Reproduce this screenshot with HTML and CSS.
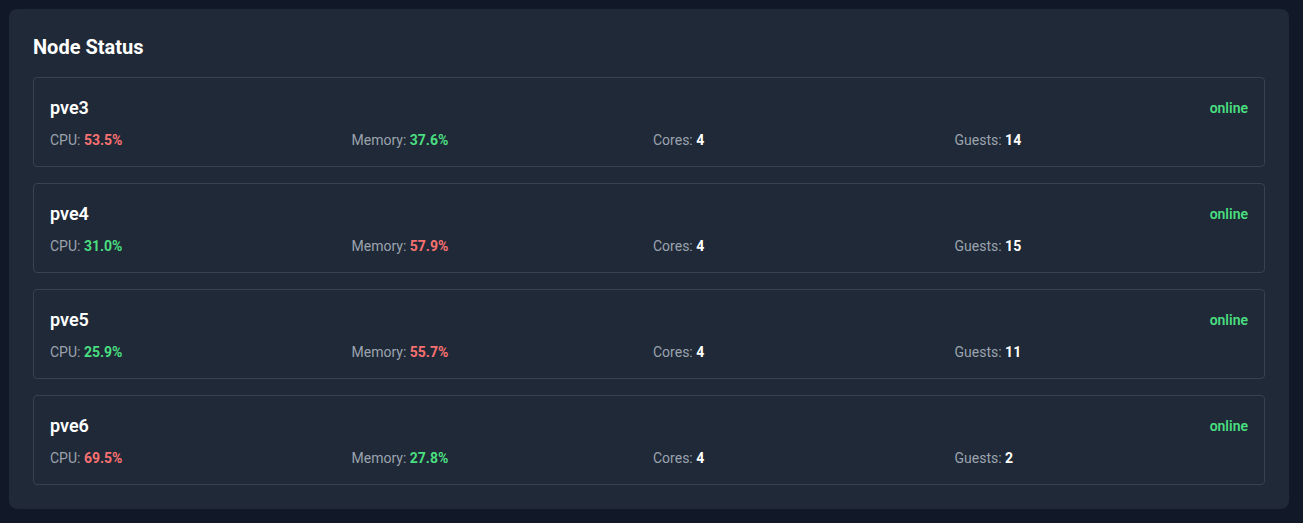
FILE: index.html
```html
<!DOCTYPE html>
<html>
<head>
<meta charset="utf-8">
<link rel="stylesheet" href="styles.css">
</head>
<body>
<div class="panel">
  <h2 class="title">Node Status</h2>
  <div class="list">
    <div class="node">
      <div class="head"><span class="name">pve3</span><span class="status">online</span></div>
      <div class="stats">
        <div><span class="lbl">CPU:</span> <span class="val red">53.5%</span></div>
        <div><span class="lbl">Memory:</span> <span class="val green">37.6%</span></div>
        <div><span class="lbl">Cores:</span> <span class="val">4</span></div>
        <div><span class="lbl">Guests:</span> <span class="val">14</span></div>
      </div>
    </div>
    <div class="node">
      <div class="head"><span class="name">pve4</span><span class="status">online</span></div>
      <div class="stats">
        <div><span class="lbl">CPU:</span> <span class="val green">31.0%</span></div>
        <div><span class="lbl">Memory:</span> <span class="val red">57.9%</span></div>
        <div><span class="lbl">Cores:</span> <span class="val">4</span></div>
        <div><span class="lbl">Guests:</span> <span class="val">15</span></div>
      </div>
    </div>
    <div class="node">
      <div class="head"><span class="name">pve5</span><span class="status">online</span></div>
      <div class="stats">
        <div><span class="lbl">CPU:</span> <span class="val green">25.9%</span></div>
        <div><span class="lbl">Memory:</span> <span class="val red">55.7%</span></div>
        <div><span class="lbl">Cores:</span> <span class="val">4</span></div>
        <div><span class="lbl">Guests:</span> <span class="val">11</span></div>
      </div>
    </div>
    <div class="node">
      <div class="head"><span class="name">pve6</span><span class="status">online</span></div>
      <div class="stats">
        <div><span class="lbl">CPU:</span> <span class="val red">69.5%</span></div>
        <div><span class="lbl">Memory:</span> <span class="val green">27.8%</span></div>
        <div><span class="lbl">Cores:</span> <span class="val">4</span></div>
        <div><span class="lbl">Guests:</span> <span class="val">2</span></div>
      </div>
    </div>
  </div>
</div>
</body>
</html>
```
FILE: styles.css
```css
html, body {
  margin: 0;
  background: #111827;
}
body {
  padding: 9px 14px 15px 9px;
  font-family: Roboto, "Noto Sans", sans-serif;
  color: #fff;
}
.panel {
  background: #1f2937;
  border-radius: 8px;
  padding: 24px;
  width: 1280px;
  box-sizing: border-box;
}
.title {
  margin: 0 0 16px;
  font-size: 20px;
  line-height: 28px;
  font-weight: 700;
}
.list {
  display: flex;
  flex-direction: column;
  gap: 16px;
}
.node {
  border: 1px solid #374151;
  border-radius: 4px;
  padding: 16px;
}
.head {
  display: flex;
  justify-content: space-between;
  align-items: center;
  height: 28px;
}
.name {
  font-size: 18px;
  font-weight: 600;
  line-height: 28px;
}
.status {
  font-size: 14px;
  font-weight: 600;
  color: #4ade80;
}
.stats {
  margin-top: 8px;
  display: grid;
  grid-template-columns: repeat(4, 1fr);
  gap: 8px;
  font-size: 14px;
  line-height: 20px;
}
.lbl { color: #9ca3af; }
.val { font-weight: 700; color: #fff; }
.val.red { color: #f87171; }
.val.green { color: #4ade80; }
```
